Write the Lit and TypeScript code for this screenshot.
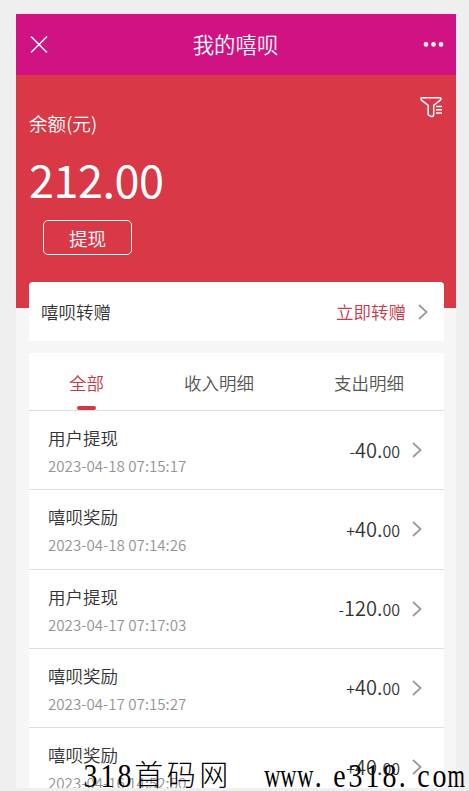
import { html, css, svg, LitElement } from 'lit';
import { customElement, property, state } from 'lit/decorators.js';
import { classMap } from 'lit/directives/class-map.js';

interface Entry {
  name: string;
  time: string;
  sign: string;
  whole: string;
}

const chevron = html`
  <svg width="10" height="16" viewBox="0 0 10 16" fill="none" stroke="#999" stroke-width="1.7">
    <path d="M1 1L8.6 8L1 15" />
  </svg>
`;

@customElement('bill-row')
export class BillRow extends LitElement {
  static styles = css`
    :host {
      display: flex;
      justify-content: space-between;
      box-sizing: border-box;
      height: 79.25px;
      padding: 0 22px 0 19px;
      border-bottom: 1px solid #dedede;
      color: #333;
    }
    .name {
      margin-top: 14px;
      font-size: 17.5px;
      line-height: 26px;
    }
    .time {
      margin-top: 2px;
      font-size: 15.15px;
      line-height: 24px;
      color: #949494;
    }
    .side {
      display: flex;
      align-items: center;
      gap: 12px;
    }
    .amount {
      font-size: 16px;
      line-height: 30px;
      white-space: nowrap;
    }
    .whole {
      font-size: 20px;
    }
    svg {
      display: block;
    }
  `;

  @property({ attribute: false }) entry!: Entry;

  render() {
    const { name, time, sign, whole } = this.entry;
    return html`
      <div>
        <div class="name">${name}</div>
        <div class="time">${time}</div>
      </div>
      <div class="side">
        <div class="amount">${sign}<span class="whole">${whole}.</span>00</div>
        ${chevron}
      </div>
    `;
  }
}

@customElement('site-mark')
export class SiteMark extends LitElement {
  static styles = css`
    :host {
      display: flex;
      font-family: 'Liberation Serif', 'Noto Sans CJK SC', serif;
      font-size: 34px;
      font-weight: 400;
      line-height: 36px;
      color: #000;
    }
    .half,
    .full {
      display: flex;
      justify-content: center;
      width: 16.8px;
      white-space: pre;
    }
    .half span {
      transform: scaleX(0.82);
    }
    .full {
      width: 32.5px;
      font-size: 29px;
      font-weight: 300;
    }
    .half.wide span {
      transform: scaleX(0.66);
    }
    .dot {
      justify-content: flex-start;
    }
  `;

  render() {
    return [...'318首码网  www.e318.com'].map((ch) => {
      const full = ch > '\u2e80';
      const classes = { full, half: !full, wide: 'wm'.includes(ch), dot: ch === '.' };
      return html`<div class=${classMap(classes)}><span>${ch}</span></div>`;
    });
  }
}

@customElement('app-root')
export class AppRoot extends LitElement {
  static styles = css`
    :host {
      display: block;
      position: relative;
      box-sizing: border-box;
      width: 469px;
      height: 791px;
      padding: 14px 13px 3px 16px;
      overflow: hidden;
      background: #efefef;
      font-family: 'Noto Sans CJK SC', sans-serif;
      font-weight: 350;
    }
    svg {
      display: block;
    }
    .phone {
      height: 774px;
      overflow: hidden;
      background: #f6f6f6;
    }
    .bar {
      display: flex;
      align-items: center;
      justify-content: space-between;
      height: 61px;
      padding: 0 12px 0 14px;
      background: #d01282;
      color: #fff;
    }
    .title {
      margin-top: -2px;
      font-size: 21.4px;
      line-height: 32px;
    }
    .balance {
      display: flex;
      justify-content: space-between;
      box-sizing: border-box;
      height: 233px;
      padding: 0 14px 0 13px;
      background: #d93846;
      color: #fff;
    }
    .label {
      margin-top: 34px;
      font-size: 18.6px;
      line-height: 28px;
    }
    .sum {
      margin-top: 10px;
      font-size: 45px;
      line-height: 64px;
      letter-spacing: -0.5px;
      font-weight: 400;
    }
    .withdraw {
      display: block;
      box-sizing: border-box;
      width: 89px;
      height: 35px;
      margin: 9px 0 0 14px;
      padding: 0;
      border: 1px solid #fff;
      border-radius: 5px;
      background: none;
      color: #fff;
      font: inherit;
      font-size: 18.6px;
      line-height: 32px;
    }
    .filter {
      margin-top: 21px;
    }
    .card {
      margin: 0 12px 0 13px;
      background: #fff;
    }
    .transfer {
      position: relative;
      display: flex;
      align-items: center;
      justify-content: space-between;
      height: 59px;
      margin-top: -26px;
      padding: 0 16px 0 12px;
      border-radius: 4px 4px 0 0;
      color: #333;
      font-size: 17.5px;
    }
    .go {
      display: flex;
      align-items: center;
      gap: 12px;
      color: #c9394a;
    }
    .list {
      margin-top: 12px;
    }
    .tabs {
      display: grid;
      grid-template-columns: 115px 150px 150px;
      box-sizing: border-box;
      height: 58px;
      border-bottom: 1px solid #dedede;
    }
    .tab {
      display: flex;
      flex-direction: column;
      align-items: center;
      justify-content: space-between;
      padding-top: 16px;
      font-size: 17.5px;
      line-height: 28px;
      color: #555;
    }
    .tab.active {
      color: #c9394a;
    }
    .tab.active::after {
      content: '';
      width: 19px;
      height: 4px;
      border-radius: 2px;
      background: #d03848;
    }
    .mark {
      position: absolute;
      left: 82px;
      top: 758px;
    }
  `;

  @state() private tab = 0;

  private tabs = ['全部', '收入明细', '支出明细'];

  private entries: Entry[] = [
    { name: '用户提现', time: '2023-04-18 07:15:17', sign: '-', whole: '40' },
    { name: '嘻呗奖励', time: '2023-04-18 07:14:26', sign: '+', whole: '40' },
    { name: '用户提现', time: '2023-04-17 07:17:03', sign: '-', whole: '120' },
    { name: '嘻呗奖励', time: '2023-04-17 07:15:27', sign: '+', whole: '40' },
    { name: '嘻呗奖励', time: '2023-04-16 14:52:50', sign: '+', whole: '40' },
  ];

  render() {
    return html`
      <div class="phone">
        <div class="bar">
          <svg width="18" height="18" viewBox="0 0 18 18" stroke="#fff" stroke-width="1.5">
            <path d="M1 .5L17 16.5M17 .5L1 16.5" />
          </svg>
          <div class="title">我的嘻呗</div>
          <svg width="21" height="6" viewBox="0 0 21 6" fill="#fff">
            ${[3, 10.5, 18].map((x) => svg`<circle cx=${x} cy="2.4" r="2.3" />`)}
          </svg>
        </div>
        <div class="balance">
          <div>
            <div class="label">余额(元)</div>
            <div class="sum">212.00</div>
            <button class="withdraw">提现</button>
          </div>
          <svg class="filter" width="22" height="23" viewBox="0 0 22 23" fill="none" stroke="#fff" stroke-width="1.5" stroke-linejoin="round">
            <path d="M1.3 1.8H20.5Q21.6 3 20 4.3L13.7 9.3V18.5Q13.7 20.6 11.3 20.6L8.2 18.8V9.3L1.8 4.3Q.3 2.9 1.3 1.8Z" />
            <path d="M16 10.6H22M16 13.8H22M16 17H22" />
          </svg>
        </div>
        <div class="card transfer">
          <span>嘻呗转赠</span>
          <span class="go">立即转赠 ${chevron}</span>
        </div>
        <div class="card list">
          <div class="tabs">
            ${this.tabs.map(
              (t, i) => html`
                <div class=${classMap({ tab: true, active: i === this.tab })} @click=${() => (this.tab = i)}>${t}</div>
              `
            )}
          </div>
          ${this.entries.map((e) => html`<bill-row .entry=${e}></bill-row>`)}
        </div>
      </div>
      <site-mark class="mark"></site-mark>
    `;
  }
}
